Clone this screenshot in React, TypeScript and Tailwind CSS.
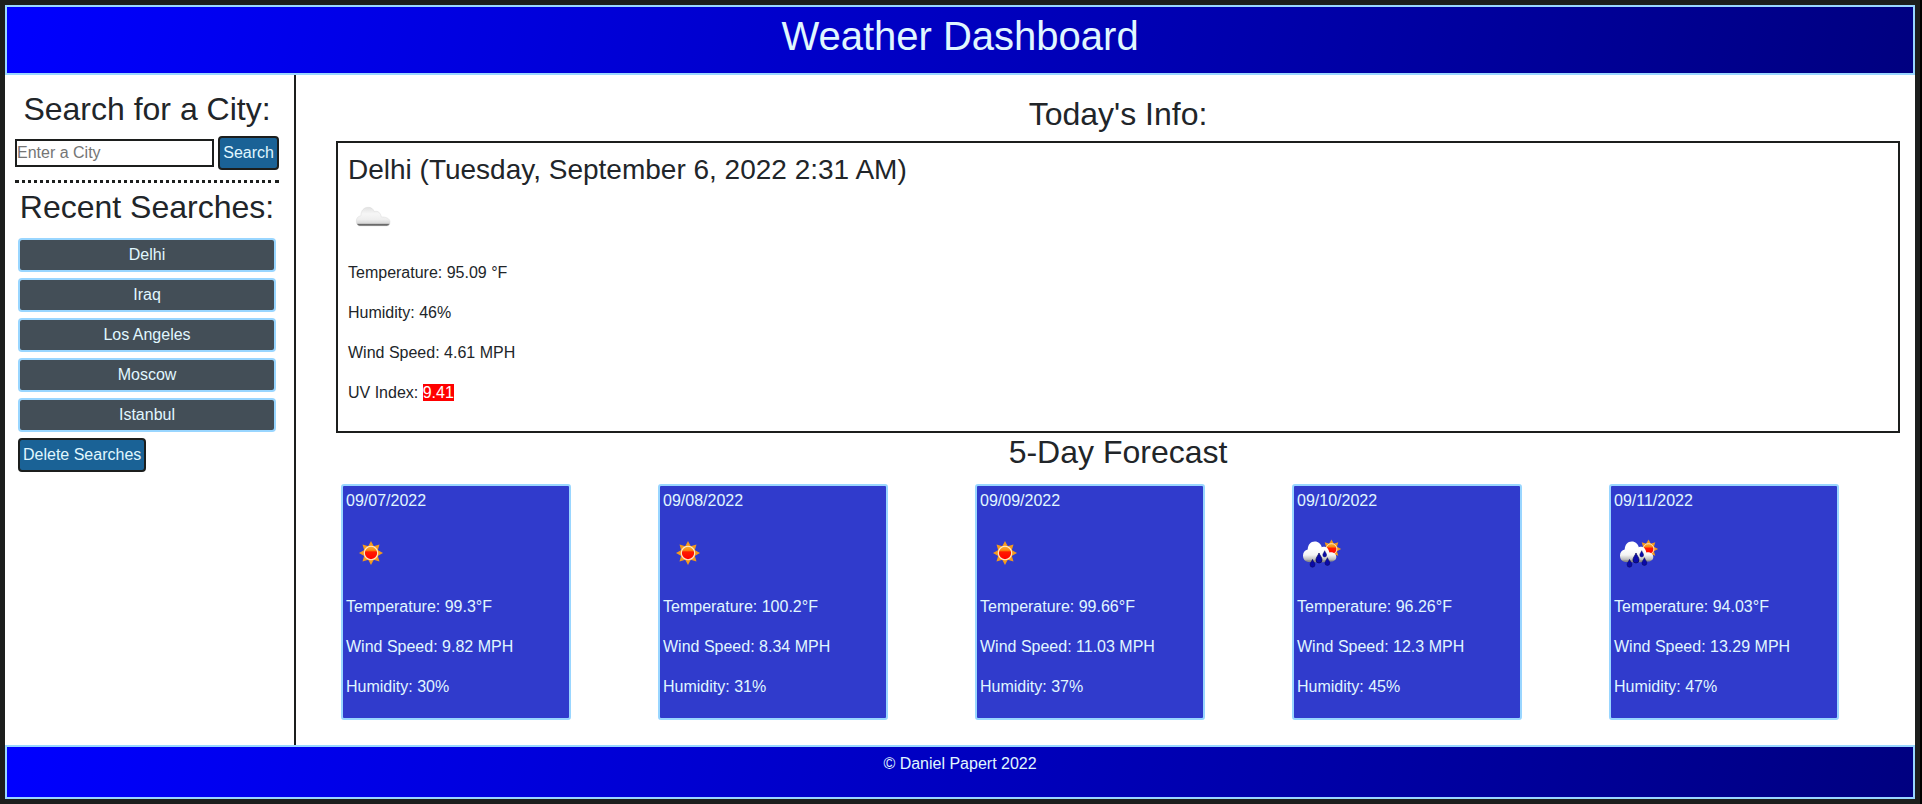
import { useState } from "react";

type Sky = "cloud" | "sun" | "rain";

interface Day {
  date: string;
  sky: Sky;
  temperature: string;
  wind: string;
  humidity: string;
}

const searches = ["Delhi", "Iraq", "Los Angeles", "Moscow", "Istanbul"];

const forecast: Day[] = [
  { date: "09/07/2022", sky: "sun", temperature: "99.3°F", wind: "9.82 MPH", humidity: "30%" },
  { date: "09/08/2022", sky: "sun", temperature: "100.2°F", wind: "8.34 MPH", humidity: "31%" },
  { date: "09/09/2022", sky: "sun", temperature: "99.66°F", wind: "11.03 MPH", humidity: "37%" },
  { date: "09/10/2022", sky: "rain", temperature: "96.26°F", wind: "12.3 MPH", humidity: "45%" },
  { date: "09/11/2022", sky: "rain", temperature: "94.03°F", wind: "13.29 MPH", humidity: "47%" },
];

const RAY = "M0 -12 L2.9 -6.6 L0 -5.5 L-2.9 -6.6 Z";

function SunShape({ id }: { id: string }) {
  return (
    <>
      <defs>
        <linearGradient id={id} x1="0" y1="0" x2="0" y2="1">
          <stop offset="0" stopColor="#f9b233" />
          <stop offset="0.3" stopColor="#f98a10" />
          <stop offset="0.42" stopColor="#ff1a00" />
          <stop offset="1" stopColor="#ff0000" />
        </linearGradient>
      </defs>
      {[0, 45, 90, 135, 180, 225, 270, 315].map((angle) => (
        <path key={angle} d={RAY} fill="#f59a1c" transform={`rotate(${angle})`} />
      ))}
      <circle r="7.6" fill="#f2a33a" />
      <circle r="6.7" fill={`url(#${id})`} stroke="#ffe9c9" strokeWidth="1.1" />
    </>
  );
}

function Drop({ x, y, size }: { x: number; y: number; size: number }) {
  return (
    <path
      d="M0 -5.2 C0.8 -2.8 3 -0.8 3 1.6 A3 3 0 0 1 -3 1.6 C-3 -0.8 -0.8 -2.8 0 -5.2 Z"
      fill="#0a0aa8"
      stroke="#06065a"
      strokeWidth="0.7"
      transform={`translate(${x} ${y}) scale(${size})`}
    />
  );
}

function SkyIcon({ sky, id }: { sky: Sky; id: string }) {
  return (
    <svg className="mb-4 block size-[50px]" viewBox="0 0 50 50" role="img" aria-label={sky}>
      <defs>
        <linearGradient id={`${id}-cloud`} x1="0" y1="0" x2="0" y2="1">
          <stop offset="0" stopColor={sky === "cloud" ? "#e2e2e2" : "#ffffff"} />
          <stop offset="0.35" stopColor={sky === "cloud" ? "#f6f6f6" : "#ffffff"} />
          <stop offset="0.65" stopColor={sky === "cloud" ? "#eeeeee" : "#f4f4f4"} />
          <stop offset="0.86" stopColor={sky === "cloud" ? "#d8d8d8" : "#bdbdbd"} />
          <stop offset="0.9" stopColor={sky === "cloud" ? "#666666" : "#9c9c9c"} />
          <stop offset="1" stopColor="#7c7c7c" />
        </linearGradient>
      </defs>
      {sky === "cloud" && (
        <path
          d="M12 31 C9.500 31 8.300 28.500 8.300 26 C8.300 23 10.500 21 12.900 20.800 C12.800 15.500 16 12.300 20.300 12.300 C23.500 12.300 25.400 14.200 26.300 16.600 C28.800 15.600 32.600 16.800 33.300 22 C37.500 21.800 42 23.200 42 27 C42 29.500 40.500 31 38.500 31 Z"
          fill={`url(#${id}-cloud)`}
          stroke="#d4d4d4"
          strokeWidth="0.4"
        />
      )}
      {sky === "sun" && (
        <g transform="translate(25 24)">
          <SunShape id={`${id}-sun`} />
        </g>
      )}
      {sky === "rain" && (
        <>
          <g transform="translate(34.500 20) scale(0.8)">
            <SunShape id={`${id}-sun`} />
          </g>
          <path
            d="M11.500 33 C8 32.500 6 30 6 26.500 C6 23.200 8 21.200 10.700 20.600 C11 15.500 13.500 12.500 17.800 12.500 C21.500 12.500 24 15 24.800 18.300 C28.600 16.600 31.800 19.400 32.300 23.400 C36 22.700 39.300 24.600 39.300 28 C39.300 30.900 37 32.500 34 32.500 C26 33.500 18 33.500 11.500 33 Z"
            fill={`url(#${id}-cloud)`}
          />
          <Drop x={15.500} y={34.500} size={0.8} />
          <Drop x={22} y={29.300} size={1.02} />
          <Drop x={27.700} y={25} size={0.64} />
          <Drop x={30.400} y={32.800} size={0.8} />
        </>
      )}
    </svg>
  );
}

const actionButton =
  "h-[34px] rounded-[4px] border-2 border-[#1c1e1d] bg-[#1a6296] px-[3px] text-base text-[#e0f7ff]";
const band =
  "border-2 border-[#99d6ff] bg-[linear-gradient(105deg,#0000ff,#000080)] p-[5px] text-center text-[#e0f7ff]";
const heading = "mb-2 text-center text-[32px] leading-[38px]";

export default function App() {
  const [city, setCity] = useState("");

  return (
    <div className="min-h-screen bg-black pr-[2px] font-['Liberation_Sans',Arial,sans-serif] text-base text-[#212529]">
      <div className="flex min-h-screen flex-col border-[5px] border-[#1c1e1d] bg-white">
        <header className={band}>
          <h1 className="mb-2 text-[40px] leading-[48px]">Weather Dashboard</h1>
        </header>

        <div className="flex grow">
          <aside className="w-[291px] shrink-0 border-r-2 border-[#1c1e1d] pt-[15px] pr-[15px] pl-[10px]">
            <h2 className={heading}>
              <label htmlFor="city">Search for a City:</label>
            </h2>
            <form className="flex items-center gap-1" onSubmit={(event) => event.preventDefault()}>
              <input
                id="city"
                className="h-7 w-full min-w-0 border-2 border-[#1c1e1d] bg-white placeholder:text-[#757575]"
                placeholder="Enter a City"
                value={city}
                onChange={(event) => setCity(event.target.value)}
              />
              <button className={actionButton}>Search</button>
            </form>
            <hr className="mt-[10px] mb-[5px] border-t-[3px] border-dotted border-[#1c1e1d]" />
            <h2 className={heading}>Recent Searches:</h2>
            <div className="flex flex-col items-start gap-[6px] px-[3px] pt-1">
              {searches.map((name) => (
                <button
                  key={name}
                  className="h-[34px] w-full rounded-[4px] border-2 border-[#99d6ff] bg-[#434e57] text-[#e0f7ff]"
                >
                  {name}
                </button>
              ))}
              <button className={actionButton}>Delete Searches</button>
            </div>
          </aside>

          <main className="grow pt-5 pr-[15px] pb-[25px] pl-10">
            <h2 className={heading}>Today's Info:</h2>
            <section className="border-2 border-[#1c1e1d] p-[10px]">
              <h3 className="mb-2 text-[28px] leading-[34px]">Delhi (Tuesday, September 6, 2022 2:31 AM)</h3>
              <SkyIcon sky="cloud" id="today" />
              <p className="mb-4">Temperature: 95.09 °F</p>
              <p className="mb-4">Humidity: 46%</p>
              <p className="mb-4">Wind Speed: 4.61 MPH</p>
              <p className="mb-4">
                UV Index: <span className="bg-[#ff0000] text-white">9.41</span>
              </p>
            </section>

            <h2 className={heading}>5-Day Forecast</h2>
            <div className="grid grid-cols-5 gap-[87px] pt-[5px] pr-[61px] pl-[5px]">
              {forecast.map((day) => (
                <article
                  key={day.date}
                  className="rounded-[3px] border-2 border-[#99d6ff] bg-[#303bcc] p-[3px] text-[#e0f7ff]"
                >
                  <p className="mb-4">{day.date}</p>
                  <SkyIcon sky={day.sky} id={`d${day.date.slice(3, 5)}`} />
                  <p className="mb-4">Temperature: {day.temperature}</p>
                  <p className="mb-4">Wind Speed: {day.wind}</p>
                  <p className="mb-4">Humidity: {day.humidity}</p>
                </article>
              ))}
            </div>
          </main>
        </div>

        <footer className={band}>
          <p className="mb-4">© Daniel Papert 2022</p>
        </footer>
      </div>
    </div>
  );
}
